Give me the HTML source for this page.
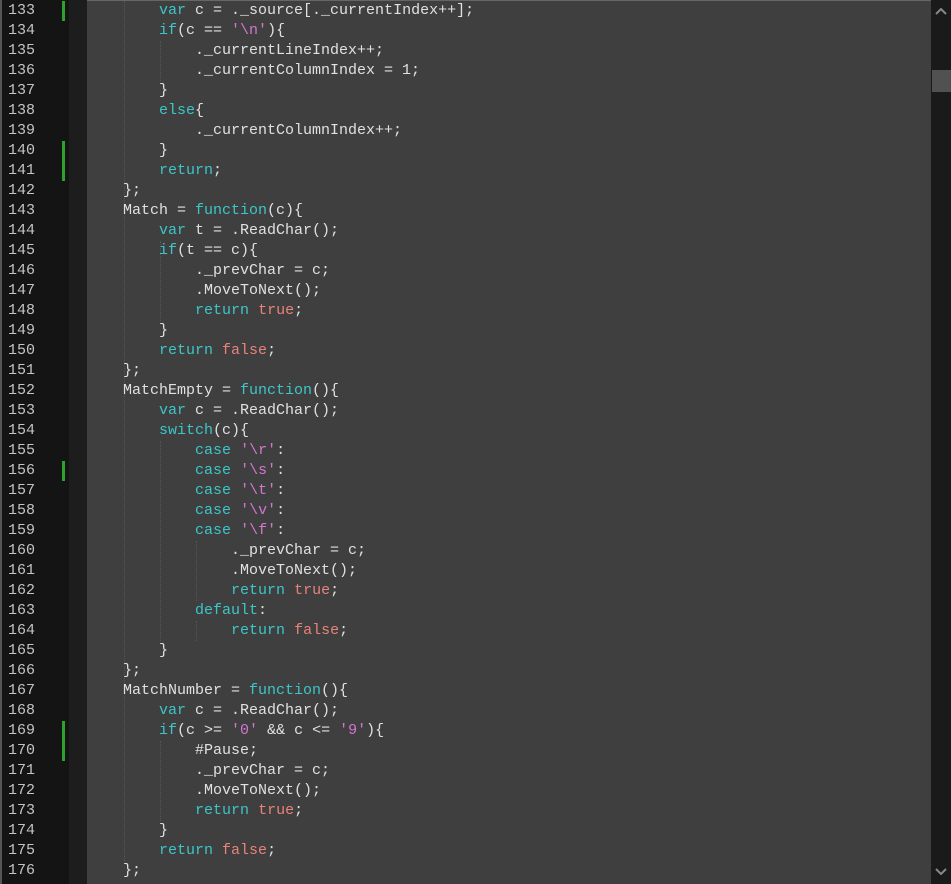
<!DOCTYPE html>
<html><head><meta charset="utf-8"><style>
html,body{margin:0;padding:0;width:951px;height:884px;overflow:hidden;background:#3f3f3f;}
#g{position:absolute;left:0;top:0;width:69px;height:884px;background:#141414;border-left:2px solid #555;box-sizing:border-box;}
#g2{position:absolute;left:69px;top:0;width:18px;height:884px;background:#1d1d1d;}
#top{position:absolute;left:0;top:0;width:951px;height:1px;background:#666;}
#sb{position:absolute;left:931px;top:0;width:20px;height:884px;background:#1a1a1a;}
#th{position:absolute;left:932px;top:70px;width:19px;height:22px;background:#515151;}
.n{position:absolute;left:8px;width:40px;font:15px/20px "Liberation Mono",monospace;color:#c4c4c4;}
.gb{position:absolute;left:62px;width:3px;background:#2ea02e;}
.l{position:absolute;left:87px;font:15px/20px "Liberation Mono",monospace;color:#e0e0e0;white-space:pre;}
.k{color:#3cc6c8}.s{color:#d276d2}.b{color:#e8827a}
.ig{position:absolute;width:0;border-left:1px dotted #555;}
</style></head><body>
<div id="top"></div>
<div id="g"></div><div id="g2"></div>
<div class="ig" style="left:124px;top:1px;height:860px"></div>
<div class="ig" style="left:160px;top:41px;height:40px"></div>
<div class="ig" style="left:160px;top:241px;height:80px"></div>
<div class="ig" style="left:160px;top:441px;height:200px"></div>
<div class="ig" style="left:196px;top:541px;height:60px"></div>
<div class="ig" style="left:196px;top:621px;height:20px"></div>
<div class="ig" style="left:160px;top:741px;height:80px"></div>
<div id="sb"></div><div id="th"></div>
<svg style="position:absolute;left:935px;top:8px" width="12" height="8"><path d="M1 6 L6 1 L11 6" stroke="#888" stroke-width="2" fill="none"/></svg>
<svg style="position:absolute;left:935px;top:867px" width="12" height="8"><path d="M1 2 L6 7 L11 2" stroke="#888" stroke-width="2" fill="none"/></svg>
<div class="gb" style="top:1px;height:20px"></div>
<div class="gb" style="top:141px;height:40px"></div>
<div class="gb" style="top:461px;height:20px"></div>
<div class="gb" style="top:721px;height:40px"></div>
<div id="c"></div>
<script>
var L=[
'        <span class="k">var</span> c = ._source[._currentIndex++];',
'        <span class="k">if</span>(c == <span class="s">\'\\n\'</span>){',
'            ._currentLineIndex++;',
'            ._currentColumnIndex = 1;',
'        }',
'        <span class="k">else</span>{',
'            ._currentColumnIndex++;',
'        }',
'        <span class="k">return</span>;',
'    };',
'    Match = <span class="k">function</span>(c){',
'        <span class="k">var</span> t = .ReadChar();',
'        <span class="k">if</span>(t == c){',
'            ._prevChar = c;',
'            .MoveToNext();',
'            <span class="k">return</span> <span class="b">true</span>;',
'        }',
'        <span class="k">return</span> <span class="b">false</span>;',
'    };',
'    MatchEmpty = <span class="k">function</span>(){',
'        <span class="k">var</span> c = .ReadChar();',
'        <span class="k">switch</span>(c){',
'            <span class="k">case</span> <span class="s">\'\\r\'</span>:',
'            <span class="k">case</span> <span class="s">\'\\s\'</span>:',
'            <span class="k">case</span> <span class="s">\'\\t\'</span>:',
'            <span class="k">case</span> <span class="s">\'\\v\'</span>:',
'            <span class="k">case</span> <span class="s">\'\\f\'</span>:',
'                ._prevChar = c;',
'                .MoveToNext();',
'                <span class="k">return</span> <span class="b">true</span>;',
'            <span class="k">default</span>:',
'                <span class="k">return</span> <span class="b">false</span>;',
'        }',
'    };',
'    MatchNumber = <span class="k">function</span>(){',
'        <span class="k">var</span> c = .ReadChar();',
'        <span class="k">if</span>(c &gt;= <span class="s">\'0\'</span> &amp;&amp; c &lt;= <span class="s">\'9\'</span>){',
'            #Pause;',
'            ._prevChar = c;',
'            .MoveToNext();',
'            <span class="k">return</span> <span class="b">true</span>;',
'        }',
'        <span class="k">return</span> <span class="b">false</span>;',
'    };'];
var h='';
for(var i=0;i<L.length;i++){var t=1+20*i;
h+='<div class="n" style="top:'+t+'px">'+(133+i)+'</div><div class="l" style="top:'+t+'px">'+L[i]+'</div>';}
document.getElementById('c').innerHTML=h;
</script>
</body></html>
